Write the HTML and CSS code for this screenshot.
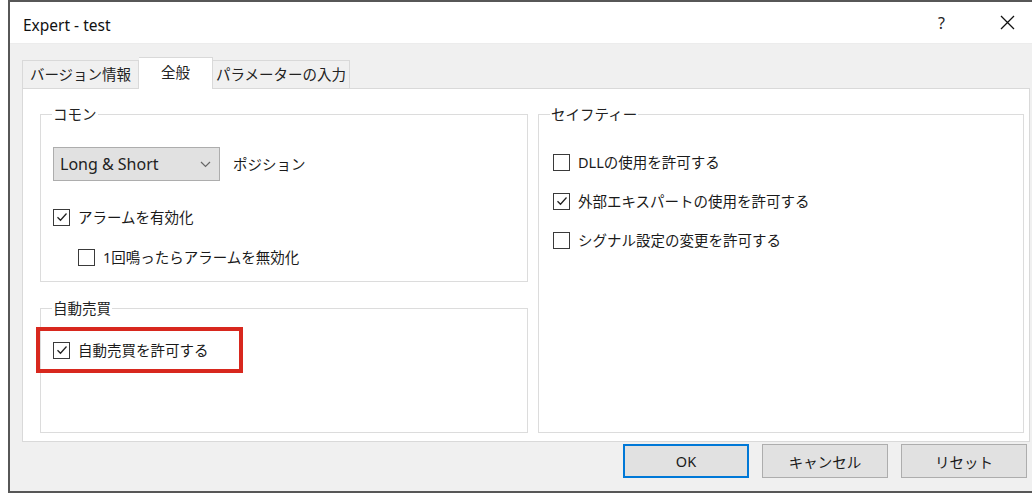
FILE: index.html
```html
<!DOCTYPE html>
<html lang="ja">
<head>
    <meta charset="UTF-8">
    <meta name="viewport" content="width=device-width, initial-scale=1.0">
    <title>Expert - test</title>
    <link rel="stylesheet" href="styles.css">
</head>
<body>
    <div class="window">
        <div class="titlebar">
            <span class="title">Expert - test</span>
            <span class="help">?</span>
            <span class="close">
                <svg width="15" height="15" viewBox="0 0 15 15"><path d="M1 1L14 14M14 1L1 14" stroke="#111" stroke-width="1.3" fill="none"/></svg>
            </span>
        </div>
        <div class="client">
            <div class="tabs">
                <div class="tab tab-info">バージョン情報</div>
                <div class="tab tab-general active">全般</div>
                <div class="tab tab-params">パラメーターの入力</div>
            </div>
            <div class="panel">
                <div class="col">
                    <fieldset class="group common">
                        <legend>コモン</legend>
                        <div class="select-row">
                            <div class="select">
                                <span>Long &amp; Short</span>
                                <svg width="11" height="7" viewBox="0 0 11 7"><path d="M1 1L5.5 5.5L10 1" stroke="#666" stroke-width="1.2" fill="none"/></svg>
                            </div>
                            <span class="select-label">ポジション</span>
                        </div>
                        <label class="check alarm">
                            <span class="box"><svg width="14" height="14" viewBox="0 0 14 14"><path d="M2.5 7.2L5.5 10.2L11.5 3.5" stroke="#222" stroke-width="1.3" fill="none"/></svg></span>
                            アラームを有効化
                        </label>
                        <label class="check indent">
                            <span class="box"></span>
                            1回鳴ったらアラームを無効化
                        </label>
                    </fieldset>
                    <fieldset class="group auto">
                        <legend>自動売買</legend>
                        <label class="check highlight">
                            <span class="box"><svg width="14" height="14" viewBox="0 0 14 14"><path d="M2.5 7.2L5.5 10.2L11.5 3.5" stroke="#222" stroke-width="1.3" fill="none"/></svg></span>
                            自動売買を許可する
                        </label>
                    </fieldset>
                </div>
                <div class="col">
                    <fieldset class="group safety">
                        <legend>セイフティー</legend>
                        <label class="check">
                            <span class="box"></span>
                            DLLの使用を許可する
                        </label>
                        <label class="check">
                            <span class="box"><svg width="14" height="14" viewBox="0 0 14 14"><path d="M2.5 7.2L5.5 10.2L11.5 3.5" stroke="#222" stroke-width="1.3" fill="none"/></svg></span>
                            外部エキスパートの使用を許可する
                        </label>
                        <label class="check">
                            <span class="box"></span>
                            シグナル設定の変更を許可する
                        </label>
                    </fieldset>
                </div>
            </div>
            <div class="buttons">
                <button class="btn default">OK</button>
                <button class="btn">キャンセル</button>
                <button class="btn">リセット</button>
            </div>
        </div>
    </div>
</body>
</html>
```

FILE: styles.css
```css
* {
    margin: 0;
    padding: 0;
    box-sizing: border-box;
    font-family: "Noto Sans", "Noto Sans CJK JP", sans-serif;
}
body {
    background-color: #fff;
    width: 1032px;
    height: 502px;
    overflow: hidden;
    color: #1a1a1a;
    font-size: 14.5px;
    line-height: 20px;
}
.window {
    margin-left: 8px;
    width: 1030px;
    height: 493px;
    border: 2px solid #575757;
    border-right: none;
    background-color: #f0f0f0;
}
.titlebar {
    height: 42px;
    background-color: #fff;
    display: flex;
    align-items: center;
    padding-left: 13px;
    border-bottom: 1px solid #ececec;
}
.title {
    flex: 1;
    font-size: 15.5px;
    color: #111;
    padding-top: 5px;
}
.help {
    font-size: 16px;
    color: #222;
    margin-right: 55px;
}
.close {
    display: flex;
    margin-right: 23px;
}
.client {
    padding: 0 8px 0 12px;
}
.tabs {
    display: flex;
    align-items: flex-end;
    height: 31px;
    margin-top: 13px;
}
.tab {
    height: 28px;
    border: 1px solid #d9d9d9;
    border-bottom: none;
    background-color: #f0f0f0;
    text-align: center;
    line-height: 26px;
    color: #222;
}
.tab-info { width: 117px; }
.tab-general { width: 74px; }
.tab-params { width: 137px; border-left: none; }
.tab.active {
    height: 32px;
    margin-bottom: -1px;
    background-color: #fff;
    border-left: none;
    position: relative;
    z-index: 1;
    line-height: 28px;
}
.panel {
    height: 354px;
    background-color: #fff;
    border: 1px solid #d9d9d9;
    padding: 15px 5px 8px 17px;
    display: grid;
    grid-template-columns: 488px 486px;
    column-gap: 10px;
}
.col {
    display: flex;
    flex-direction: column;
}
.group {
    border: 1px solid #dcdcdc;
    padding: 0 10px 15px 11px;
    display: flex;
    flex-direction: column;
}
.group legend {
    padding: 0 1px;
    line-height: 20px;
    color: #222;
}
.common {
    padding-bottom: 14px;
}
.auto {
    flex: 1;
    margin-top: 16px;
}
.safety {
    flex: 1;
    gap: 19px;
}
.select-row {
    display: flex;
    align-items: center;
    margin-top: 23px;
    margin-left: 1px;
}
.select {
    width: 167px;
    height: 34px;
    background-color: #e1e1e1;
    border: 1px solid #adadad;
    display: flex;
    align-items: center;
    justify-content: space-between;
    padding: 0 8px 0 6px;
    font-size: 16px;
    color: #222;
}
.select-label {
    margin-left: 13px;
}
.check {
    display: flex;
    align-items: center;
    height: 20px;
    gap: 8px;
    margin-left: 1px;
}
.box {
    width: 17px;
    height: 17px;
    border: 1px solid #3a3a3a;
    background-color: #fff;
    display: flex;
    align-items: center;
    justify-content: center;
    flex-shrink: 0;
}
.alarm {
    margin-top: 26px;
}
.indent {
    margin-top: 20px;
    margin-left: 26px;
}
.safety .check {
    margin-left: 3px;
}
.safety .check:first-of-type {
    margin-top: 28px;
}
.highlight {
    margin-top: 13px;
    margin-left: -12px;
    width: 199px;
    height: 38px;
    padding-left: 13px;
    outline: 4px solid #d8281e;
}
.buttons {
    display: flex;
    justify-content: flex-end;
    gap: 13px;
    margin-top: 2px;
    padding-right: 3px;
}
.btn {
    width: 126px;
    height: 34px;
    background-color: #e1e1e1;
    border: 1px solid #adadad;
    font-size: 14.5px;
    color: #1a1a1a;
}
.btn.default {
    border: 2px solid #0078d7;
}
```
